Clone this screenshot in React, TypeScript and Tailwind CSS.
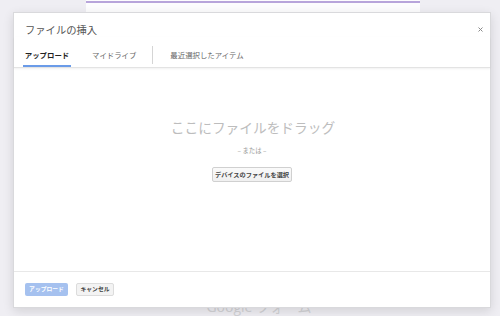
import React from "react";

const jp = { fontFamily: '"Noto Sans CJK JP", "Noto Sans", sans-serif' };

export default function App() {
  return (
    <div
      className="relative w-[500px] h-[316px] overflow-hidden bg-[#efeef3]"
      style={jp}
    >
      {/* background page */}
      <div className="flex flex-col h-full">
        <div className="ml-[86px] w-[334px] h-[290px] bg-[#fdfdfe] flex flex-col">
          <div className="mt-[1px] h-[2px] bg-[#b8a5db]" />
        </div>
        <div className="mt-[13px] flex justify-center pl-[18px] text-[14px] leading-[18px] text-[#d2d2d5]">
          <span style={{ fontFamily: '"Open Sans", "Noto Sans CJK JP", sans-serif' }}>
            Google フォーム
          </span>
        </div>
      </div>

      {/* modal dialog */}
      <div className="absolute left-[13px] top-[12px] w-[478px] h-[296px] bg-white border border-[#d9d9dc] shadow-[0_3px_10px_rgba(0,0,0,0.12)] flex flex-col">
        {/* header */}
        <div className="flex justify-between pl-[11px] pr-[7px] pt-[10px] h-[24px]">
          <div className="text-[10.3px] leading-[14px] text-[#555]">ファイルの挿入</div>
          <svg width="5" height="5" viewBox="0 0 5 5" className="mt-[4px]">
            <path d="M0.5 0.5 L4.5 4.5 M4.5 0.5 L0.5 4.5" stroke="#8a8a8a" strokeWidth="1" />
          </svg>
        </div>

        {/* tabs */}
        <div className="flex h-[31px] px-[9px] border-b border-[#e3e3e3] shadow-[0_1px_2px_rgba(0,0,0,0.06)]">
          <div className="flex flex-col w-[48px] items-center">
            <div className="pt-[13px] text-[7.4px] leading-[10px] font-bold text-[#222]">アップロード</div>
            <div className="flex-1" />
            <div className="h-[2px] w-full bg-[#6a9be8]" />
          </div>
          <div className="ml-[21px] pt-[13px] text-[7.4px] leading-[10px] text-[#666]">マイドライブ</div>
          <div className="ml-[16px] mt-[9px] w-px h-[18px] bg-[#d5d5d5]" />
          <div className="ml-[17px] pt-[13px] text-[7.4px] leading-[10px] text-[#666]">最近選択したアイテム</div>
        </div>

        {/* content */}
        <div className="flex-1 flex flex-col items-center pt-[50px]">
          <div className="text-[13.7px] leading-[18px] text-[#bdbdbd] pl-[2px]">ここにファイルをドラッグ</div>
          <div className="mt-[11px] text-[6.4px] leading-[8px] text-[#999]">– または –</div>
          <div className="mt-[12px] h-[15px] px-[2px] flex items-center border border-[#d0d0d0] rounded-[2px] bg-gradient-to-b from-[#fafafa] to-[#f0f0f0] text-[6.2px] font-bold text-[#444]">
            デバイスのファイルを選択
          </div>
        </div>

        {/* footer */}
        <div className="h-[36px] border-t border-[#e8e8e8] flex items-start gap-[8px] pl-[11px] pt-[11px]">
          <div className="h-[13px] w-[43px] flex items-center justify-center rounded-[2px] bg-[#a5c1ef] text-[5.8px] font-bold text-white">
            アップロード
          </div>
          <div className="h-[13px] w-[38px] flex items-center justify-center rounded-[2px] border border-[#dcdcdc] bg-[#f3f3f3] text-[5.8px] font-bold text-[#444]">
            キャンセル
          </div>
        </div>
      </div>
    </div>
  );
}
